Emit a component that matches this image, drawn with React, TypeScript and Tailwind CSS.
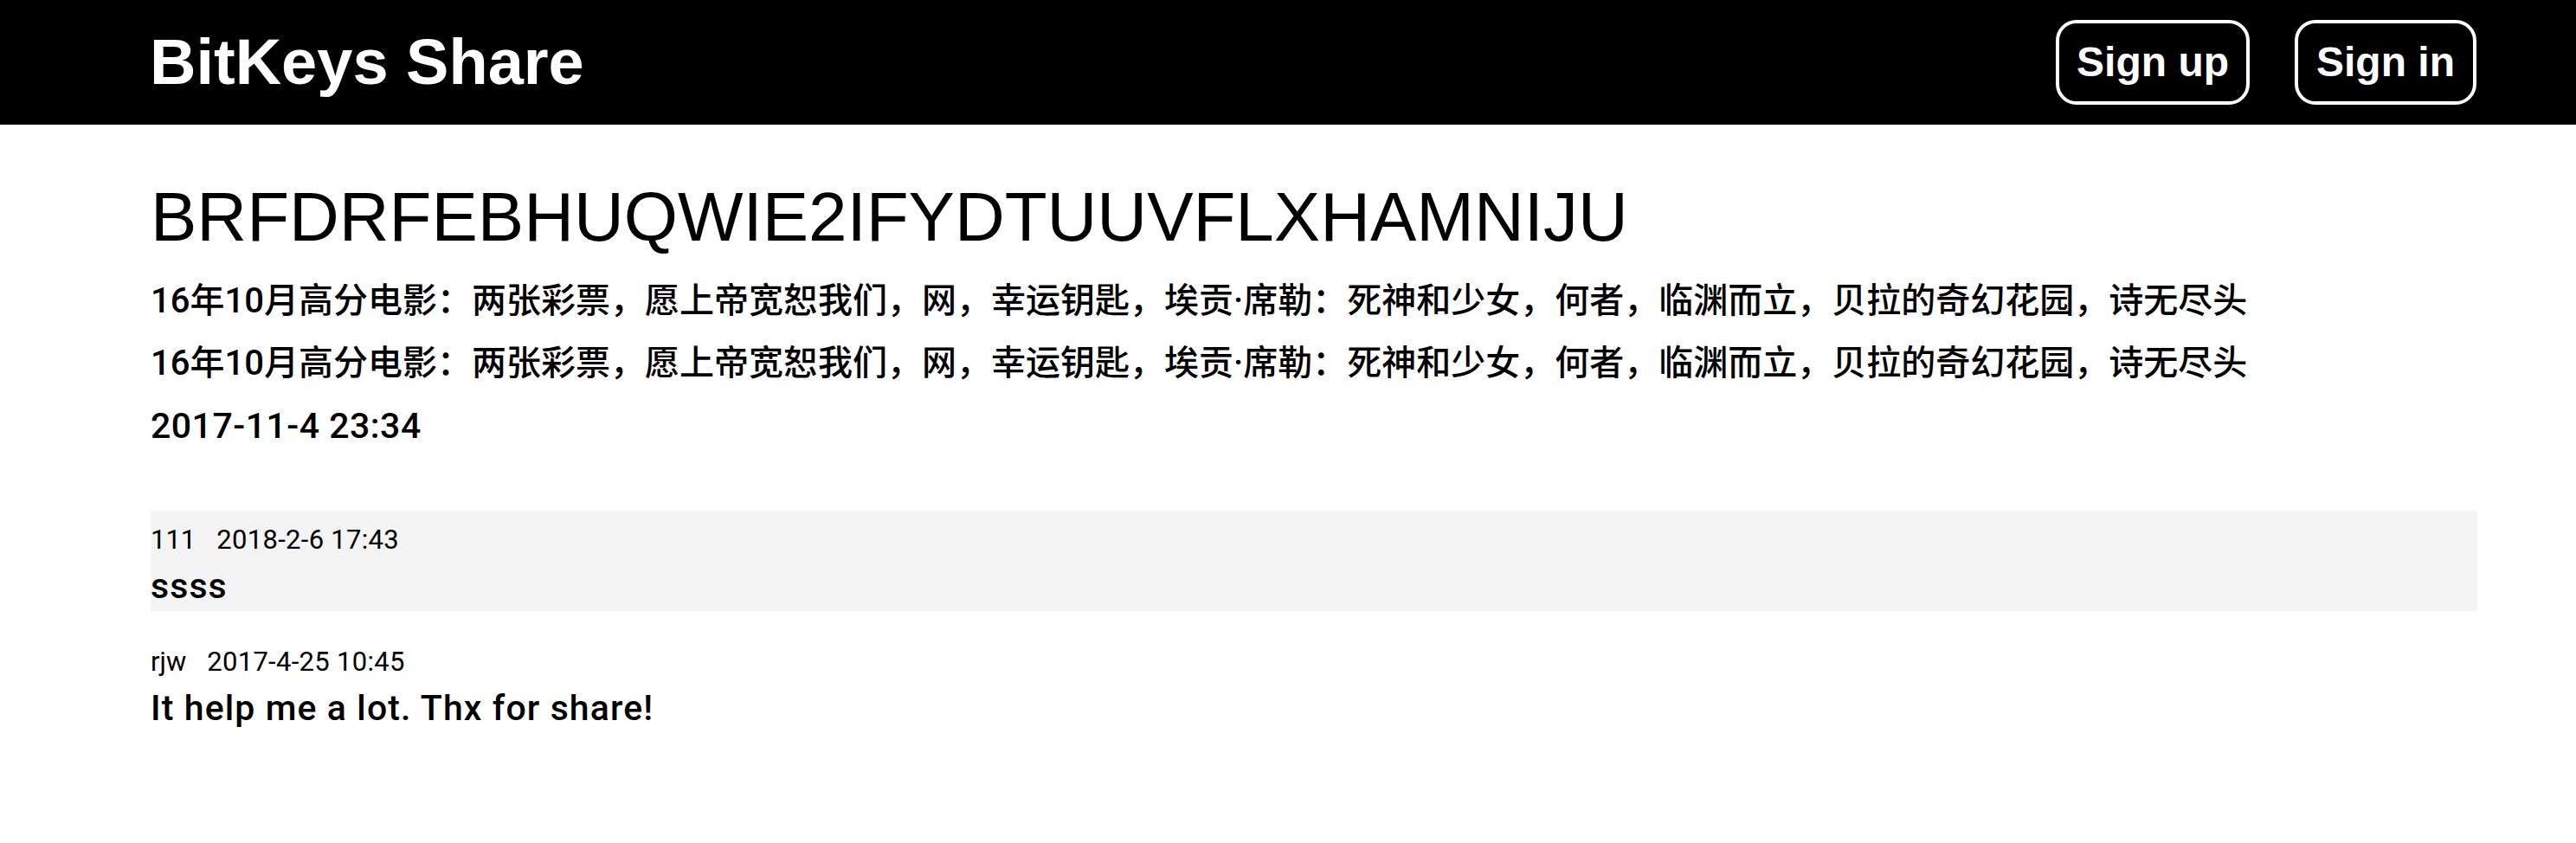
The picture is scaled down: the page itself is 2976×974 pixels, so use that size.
import React from "react";

const sans = { fontFamily: '"Liberation Sans", Arial, "Noto Sans CJK SC", sans-serif' };
const medium = { fontFamily: 'Roboto, "Noto Sans CJK SC", sans-serif' };

const comments = [
  { user: "111", time: "2018-2-6 17:43", body: "ssss", active: true },
  { user: "rjw", time: "2017-4-25 10:45", body: "It help me a lot. Thx for share!", active: false },
];

export default function App() {
  return (
    <div className="min-h-screen bg-white text-black" style={sans}>
      <header className="flex h-[144px] items-center justify-between bg-black pl-[173px] pr-[115px] text-white">
        <div className="text-[74px] font-bold leading-[74px]">BitKeys Share</div>
        <nav className="flex items-center gap-[52px]">
          <a className="flex h-[98px] items-center rounded-[24px] border-[4px] border-white px-[20px] text-[48px] font-bold leading-none">
            Sign up
          </a>
          <a className="flex h-[98px] items-center rounded-[24px] border-[4px] border-white px-[21px] text-[48px] font-bold leading-none">
            Sign in
          </a>
        </nav>
      </header>

      <main className="pl-[174px] pr-[114px]">
        <h1 className="mt-[67px] text-[80px] font-normal leading-[80px]">BRFDRFEBHUQWIE2IFYDTUUVFLXHAMNIJU</h1>
        <div className="mt-[21px]" style={medium}>
          <p className="text-[40px] font-medium leading-[72px]">
            16年10月高分电影：两张彩票，愿上帝宽恕我们，网，幸运钥匙，埃贡·席勒：死神和少女，何者，临渊而立，贝拉的奇幻花园，诗无尽头
          </p>
          <p className="text-[40px] font-medium leading-[72px]">
            16年10月高分电影：两张彩票，愿上帝宽恕我们，网，幸运钥匙，埃贡·席勒：死神和少女，何者，临渊而立，贝拉的奇幻花园，诗无尽头
          </p>
          <p className="text-[41px] font-medium leading-[72px] tracking-[0.5px]">2017-11-4 23:34</p>
        </div>

        <ul className="mt-[62px] flex flex-col gap-[29px]" style={medium}>
          {comments.map((c) => (
            <li key={c.user} className={c.active ? "bg-[#f4f4f4] pb-[1px] pt-[14px]" : "pb-[1px] pt-[10px]"}>
              <div className="flex gap-[24px] text-[31px] leading-[40px]">
                <span>{c.user}</span>
                <span className="tracking-[0.3px]">{c.time}</span>
              </div>
              <div className="mt-[5px] text-[41px] font-medium leading-[56px] tracking-[1.1px]">{c.body}</div>
            </li>
          ))}
        </ul>
      </main>
    </div>
  );
}
